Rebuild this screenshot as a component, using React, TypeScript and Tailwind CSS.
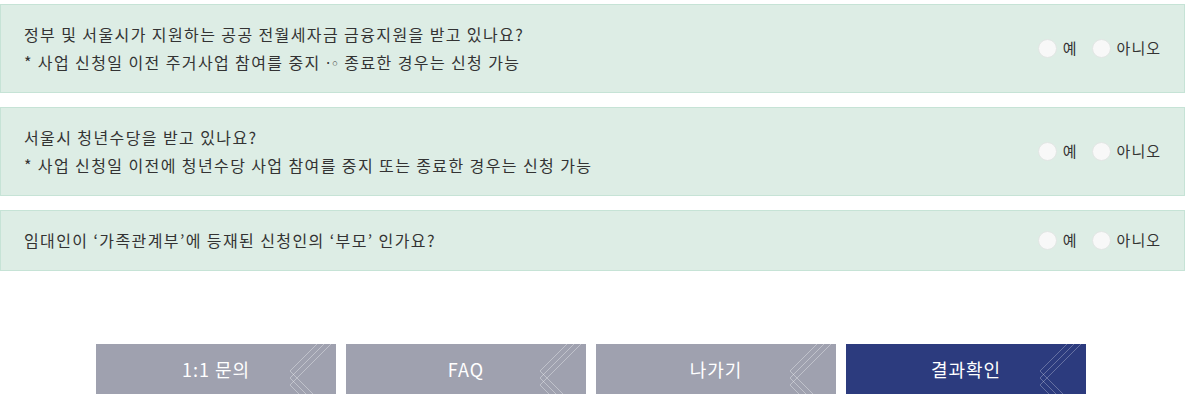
import React from "react";

const font = { fontFamily: '"Noto Sans CJK KR", "Noto Sans", sans-serif' };

function Radio({ label }: { label: string }) {
  return (
    <label className="flex items-center gap-[6px]">
      <span className="block w-[19px] h-[19px] rounded-full bg-[#f8f8f8] border border-[#e2e6e4]" />
      <span className="text-[15px] text-[#333] tracking-[1px]">{label}</span>
    </label>
  );
}

function Question({ lines }: { lines: React.ReactNode[] }) {
  return (
    <div className="w-[1185px] flex items-center justify-between border border-[#c6e3d6] bg-[#ddede5] pl-[23px] pr-[23px] pt-[15px] pb-[16px]">
      <div className="text-[16px] leading-[28px] text-[#333] tracking-[1.4px]">
        {lines.map((l, i) => (
          <p key={i} className="h-[28px]">{l}</p>
        ))}
      </div>
      <div className="flex items-center gap-[14px]">
        <Radio label="예" />
        <Radio label="아니오" />
      </div>
    </div>
  );
}

function Deco({ stroke }: { stroke: string }) {
  return (
    <svg className="absolute right-0 top-0" width="60" height="50" viewBox="0 0 60 50" fill="none">
      <polyline points="41,0 14,27 37,50" stroke={stroke} strokeWidth="1" />
      <polyline points="48,0 14,34 30,50" stroke={stroke} strokeWidth="1" />
      <polyline points="55,0 14,41 23,50" stroke={stroke} strokeWidth="1" />
    </svg>
  );
}

function Btn({ label, navy }: { label: string; navy?: boolean }) {
  return (
    <button
      className={
        navy
          ? "relative overflow-hidden w-[240px] h-[50px] bg-[#2c3b7e] text-white text-[18px] tracking-[1px] flex items-center justify-center"
          : "relative overflow-hidden w-[240px] h-[50px] bg-[#9fa1af] text-white text-[18px] tracking-[1px] flex items-center justify-center"
      }
    >
      <span className="relative">{label}</span>
      <Deco stroke={navy ? "rgba(255,255,255,0.28)" : "rgba(255,255,255,0.35)"} />
    </button>
  );
}

export default function App() {
  return (
    <div className="w-[1190px] h-[400px] bg-white overflow-hidden pt-[4px]" style={font}>
      <div className="flex flex-col gap-[14px]">
        <Question
          lines={[
            "정부 및 서울시가 지원하는 공공 전월세자금 금융지원을 받고 있나요?",
            <>
              * 사업 신청일 이전 주거사업 참여를 중지{" "}
              <span className="[font-family:'DejaVu_Sans',sans-serif] text-[15px] leading-[0] tracking-[0px]">·◦</span>{" "}
              종료한 경우는 신청 가능
            </>,
          ]}
        />
        <Question
          lines={[
            "서울시 청년수당을 받고 있나요?",
            "* 사업 신청일 이전에 청년수당 사업 참여를 중지 또는 종료한 경우는 신청 가능",
          ]}
        />
        <Question lines={["임대인이 ‘가족관계부’에 등재된 신청인의 ‘부모’ 인가요?"]} />
      </div>
      <div className="w-[1182px] mt-[73px] flex justify-center gap-[10px]">
        <Btn label="1:1 문의" />
        <Btn label="FAQ" />
        <Btn label="나가기" />
        <Btn label="결과확인" navy />
      </div>
    </div>
  );
}
